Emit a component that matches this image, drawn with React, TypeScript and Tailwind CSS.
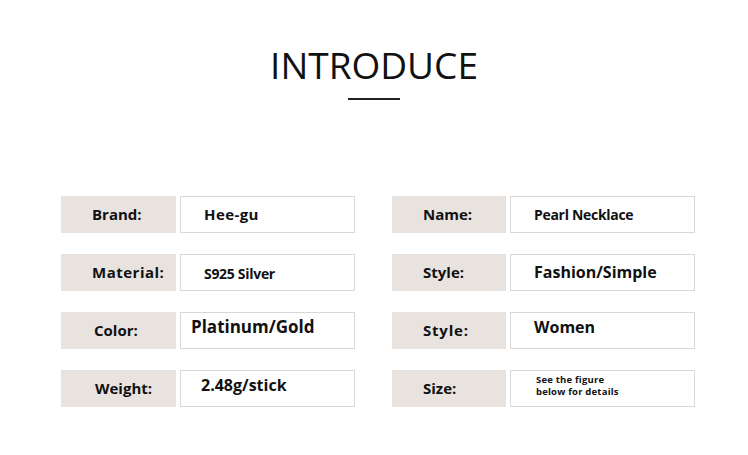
import * as React from "react";

type Cell = {
  label: string;
  labelClass?: string;
  value: React.ReactNode;
  valueClass: string;
};

const leftCells: Cell[] = [
  { label: "Brand:", value: "Hee-gu", valueClass: "pl-[23px] text-[15px] tracking-[0.4px]" },
  {
    label: "Material:",
    labelClass: "tracking-[0.5px]",
    value: "S925 Silver",
    valueClass: "pl-[23px] text-[14px] tracking-[-0.3px] pt-[2px]",
  },
  { label: "Color:", labelClass: "pl-[33px]", value: "Platinum/Gold", valueClass: "pl-[10px] text-[17px] pb-[8px]" },
  { label: "Weight:", labelClass: "pl-[34px]", value: "2.48g/stick", valueClass: "pl-[20px] text-[16px] pb-[7px]" },
];

const rightCells: Cell[] = [
  { label: "Name:", value: "Pearl Necklace", valueClass: "pl-[23px] text-[14px] tracking-[-0.3px]" },
  { label: "Style:", value: "Fashion/Simple", valueClass: "pl-[23px] text-[16px] pb-[1px]" },
  {
    label: "Style:",
    labelClass: "pl-[29px] tracking-[0.8px]",
    value: "Women",
    valueClass: "pl-[23px] text-[16px] pb-[8px]",
  },
  {
    label: "Size:",
    value: (
      <span className="flex flex-col leading-[12px]">
        <span>See the figure</span>
        <span>below for details</span>
      </span>
    ),
    valueClass: "pl-[25px] text-[9.5px] tracking-[0.2px] pb-[6px]",
  },
];

function Row({ cell, labelW, valueW }: { cell: Cell; labelW: string; valueW: string }) {
  return (
    <div className="flex h-[37px] gap-[4px]">
      <div
        className={`${labelW} flex items-center bg-[#e9e3e0] pl-[31px] text-[15px] font-bold text-[#111] ${cell.labelClass ?? ""}`}
      >
        {cell.label}
      </div>
      <div
        className={`${valueW} flex items-center border border-[#d8d8d8] bg-white font-bold text-[#111] ${cell.valueClass}`}
      >
        {cell.value}
      </div>
    </div>
  );
}

export default function App() {
  return (
    <div className="h-[455px] w-[748px] bg-white font-['Open_Sans',sans-serif]">
      <div className="flex flex-col items-center pt-[42px]">
        <h1 className="text-[37px] font-normal leading-[46px] tracking-[0px] text-[#111]">INTRODUCE</h1>
        <div className="mt-[10px] h-[2px] w-[52px] bg-[#222]" />
      </div>

      <div className="ml-[61px] mt-[96px] flex w-[634px] justify-between">
        <div className="flex flex-col gap-[21px]">
          {leftCells.map((c, i) => (
            <Row key={i} cell={c} labelW="w-[115px]" valueW="w-[175px]" />
          ))}
        </div>
        <div className="flex flex-col gap-[21px]">
          {rightCells.map((c, i) => (
            <Row key={i} cell={c} labelW="w-[114px]" valueW="w-[185px]" />
          ))}
        </div>
      </div>
    </div>
  );
}
